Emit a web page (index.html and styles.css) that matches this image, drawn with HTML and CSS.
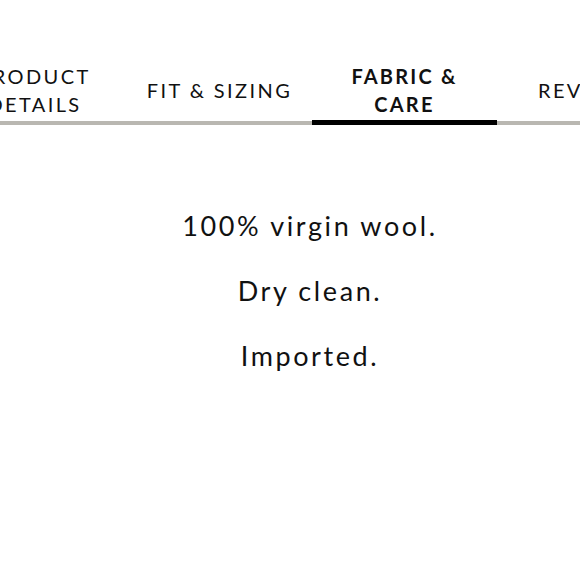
FILE: index.html
```html
<!DOCTYPE html>
<html>
<head>
<meta charset="utf-8">
<link rel="stylesheet" href="styles.css">
</head>
<body>
<div class="page">
  <nav class="tabs">
    <div class="tab">PRODUCT<br>DETAILS</div>
    <div class="tab">FIT &amp; SIZING</div>
    <div class="tab active">FABRIC &amp;<br>CARE</div>
    <div class="tab">REVIEWS</div>
  </nav>
  <section class="panel">
    <p>100% virgin wool.</p>
    <p>Dry clean.</p>
    <p>Imported.</p>
  </section>
</div>
</body>
</html>
```

FILE: styles.css
```css
html, body {
  margin: 0;
  padding: 0;
  background: #fff;
}
body {
  font-family: Lato, "Noto Sans", sans-serif;
  color: #111;
  overflow: hidden;
  width: 580px;
}
.page {
  width: 620px;
}
.tabs {
  display: flex;
  justify-content: center;
  padding-top: 63px;
  padding-left: 4px;
}
.tab {
  flex: 0 0 185px;
  height: 62px;
  padding-bottom: 4px;
  display: flex;
  align-items: center;
  justify-content: center;
  text-align: center;
  font-size: 20px;
  letter-spacing: 2.4px;
  line-height: 28px;
  border-bottom: 4px solid #b9b7b1;
  box-sizing: border-box;
}
.tab.active {
  font-weight: 700;
  letter-spacing: 2.2px;
  border-bottom: 5px solid #000;
}
.panel {
  text-align: center;
  font-size: 27px;
  letter-spacing: 2.6px;
  padding-top: 85px;
}
.panel p {
  margin: 0 0 33px;
  line-height: 32px;
}
```
